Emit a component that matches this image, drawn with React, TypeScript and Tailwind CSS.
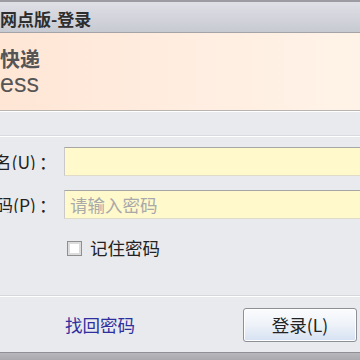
import React from "react";

const cjk = "font-['Microsoft_YaHei','Noto_Sans_CJK_SC',sans-serif]";

const Field = ({ label, placeholder }: { label: string; placeholder?: string }) => (
  <div className="flex items-center h-[29px]">
    <label className="w-[39px] shrink-0 flex justify-end overflow-hidden text-[17.5px] text-[#222] leading-none whitespace-nowrap">
      <span className="pr-[3px]">{label}</span>
    </label>
    <span className="w-[25px] shrink-0 text-[17.5px] text-[#222] leading-none">：</span>
    <input
      className={`flex-1 h-[29px] bg-[#fff9cc] border-t border-[#a6a6a6] border-l border-l-[#c9c9c9] border-b border-b-[#dedbc8] outline-none px-[5px] text-[17.5px] ${cjk} placeholder:text-[#a9a9a9]`}
      placeholder={placeholder}
    />
  </div>
);

export default function App() {
  return (
    <div className={`w-[360px] h-[360px] overflow-hidden flex flex-col bg-[#e9eaee] ${cjk}`}>
      {/* title bar */}
      <div className="h-[33px] shrink-0 border-t-2 border-t-[#9c9ca2] border-b border-b-[#a3a3a8] bg-gradient-to-b from-[#dfe0e6] to-[#c8cad2] flex items-start pt-[8px]">
        <span className="text-[17px] leading-[18px] text-[#2e2e2e] font-bold whitespace-nowrap">网点版-登录</span>
      </div>

      {/* brand header */}
      <div className="h-[78px] shrink-0 border-b border-b-[#b8b4b0] bg-gradient-to-r from-[#ffe6d5] via-[#ffede0] to-[#fff3e8] flex flex-col pt-[16px]">
        <span className="text-[20px] leading-[20px] text-[#555] font-semibold whitespace-nowrap">快递</span>
        <span className="mt-[2px] font-['Liberation_Sans',Arial,sans-serif] text-[25px] leading-[24px] text-[#555] whitespace-nowrap">ess</span>
      </div>

      {/* body */}
      <div className="flex-1 flex flex-col border-t border-t-white">
        <div className="mt-[23px] h-[2px] border-t border-t-[#d9dadf] border-b border-b-white" />
        <div className="mt-[10px] flex flex-col gap-[14px]">
          <Field label="用户名(U)" />
          <Field label="密码(P)" placeholder="请输入密码" />
        </div>

        <div className="mt-[20px] flex items-center pl-[67px] h-[18px]">
          <span className="w-[15px] h-[15px] border border-[#8f8f8f] bg-white shadow-[inset_0_0_0_2px_#dcdcdc]" />
          <span className="ml-[8px] text-[17.5px] leading-none text-[#222]">记住密码</span>
        </div>

        <div className="mt-[38px] h-[2px] border-t border-t-[#d6d7db] border-b border-b-white" />

        <div className="flex-1 flex items-center pl-[65px] pr-[3px]">
          <a href="#" className="text-[17.5px] leading-none text-[#2f2f9f] no-underline">找回密码</a>
          <button className="ml-auto w-[114px] h-[34px] rounded-[3px] border border-[#8e9098] bg-gradient-to-b from-[#fbfcfe] via-[#eef2f8] to-[#d6e1f2] text-[17.5px] leading-none text-[#222] shadow-[inset_0_0_0_1px_#ffffff]">
            登录(L)
          </button>
        </div>
      </div>

      {/* bottom edge */}
      <div className="h-[8px] shrink-0 border-t border-t-[#8f8f95] bg-gradient-to-b from-[#b7b7bc] to-[#a9a9ae]" />
    </div>
  );
}
